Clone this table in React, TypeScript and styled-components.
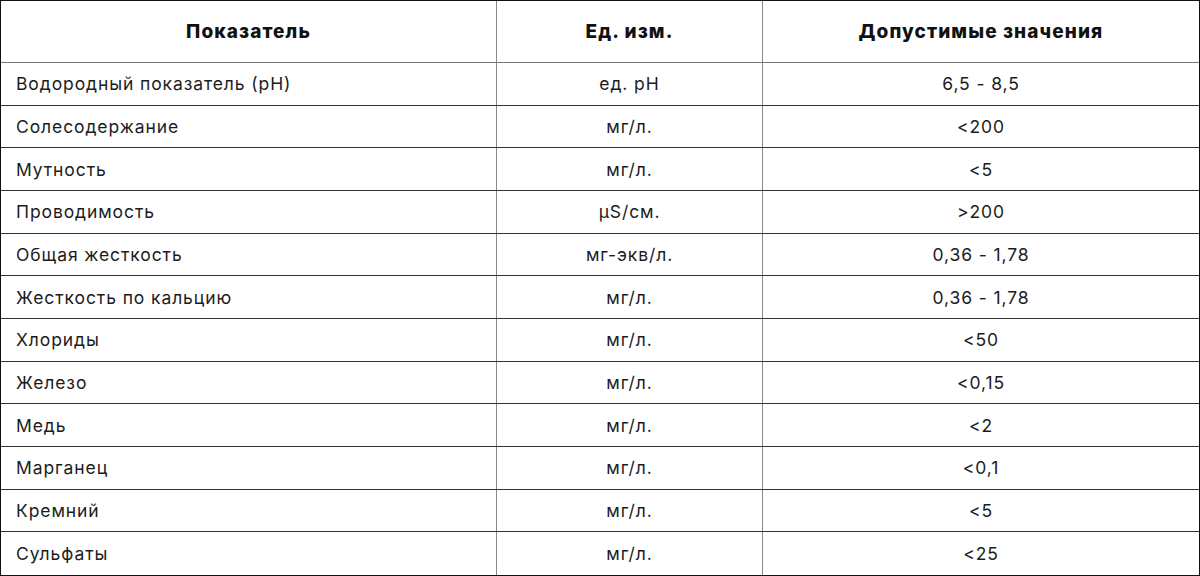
import styled, { createGlobalStyle } from "styled-components";

const GlobalStyle = createGlobalStyle`
  html, body {
    margin: 0;
    padding: 0;
    background: #fff;
  }
  * {
    box-sizing: border-box;
  }
`;

type Row = [string, string, string];

const rows: Row[] = [
  ["Водородный показатель (pH)", "ед. pH", "6,5 - 8,5"],
  ["Солесодержание", "мг/л.", "<200"],
  ["Мутность", "мг/л.", "<5"],
  ["Проводимость", "µS/см.", ">200"],
  ["Общая жесткость", "мг-экв/л.", "0,36 - 1,78"],
  ["Жесткость по кальцию", "мг/л.", "0,36 - 1,78"],
  ["Хлориды", "мг/л.", "<50"],
  ["Железо", "мг/л.", "<0,15"],
  ["Медь", "мг/л.", "<2"],
  ["Марганец", "мг/л.", "<0,1"],
  ["Кремний", "мг/л.", "<5"],
  ["Сульфаты", "мг/л.", "<25"],
];

const App = () => {
  return (
    <>
      <GlobalStyle />
      <Table>
        <HeadRow>
          <HeadCell>Показатель</HeadCell>
          <HeadCell>Ед. изм.</HeadCell>
          <HeadCell>Допустимые значения</HeadCell>
        </HeadRow>
        {rows.map(([name, unit, value]) => (
          <BodyRow key={name}>
            <Cell $align="left">{name}</Cell>
            <Cell $align="center">{unit}</Cell>
            <Cell $align="center">{value}</Cell>
          </BodyRow>
        ))}
      </Table>
    </>
  );
};

const Table = styled.div`
  width: 1200px;
  height: 576px;
  display: grid;
  grid-template-rows: 62px repeat(12, 1fr);
  border: 1px solid #111;
  font-family: Inter, "Noto Sans", sans-serif;
  color: #1c1c1c;
`;

const HeadRow = styled.div`
  display: grid;
  grid-template-columns: 496px 266px 1fr;
  border-bottom: 1px solid #777;
`;

const BodyRow = styled.div`
  display: grid;
  grid-template-columns: 496px 266px 1fr;
  border-bottom: 1px solid #333;

  &:last-child {
    border-bottom: none;
  }
`;

const HeadCell = styled.div`
  display: flex;
  align-items: center;
  justify-content: center;
  font-size: 19px;
  font-weight: 800;
  letter-spacing: 1.1px;
  color: #111;
  border-right: 1px solid #888;

  &:last-child {
    border-right: none;
  }
`;

const Cell = styled.div<{ $align: "left" | "center" }>`
  display: flex;
  align-items: center;
  justify-content: ${({ $align }) => ($align === "left" ? "flex-start" : "center")};
  padding-left: ${({ $align }) => ($align === "left" ? "15px" : "0")};
  font-size: 17.5px;
  font-weight: 400;
  letter-spacing: 0.9px;
  border-right: 1px solid #888;

  &:last-child {
    border-right: none;
  }
`;

export default App;
